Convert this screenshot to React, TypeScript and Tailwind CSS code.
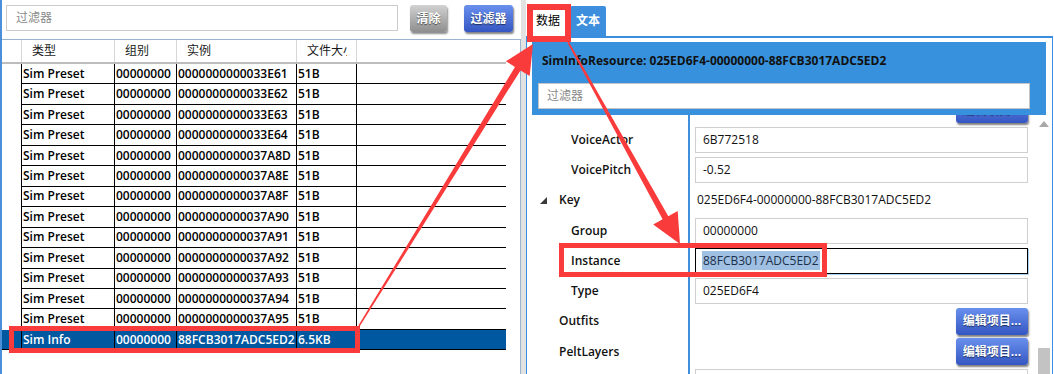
import React from "react";

const FONT = "font-['Open_Sans','Noto_Sans_CJK_SC',sans-serif]";

const ids = ["33E61", "33E62", "33E63", "33E64", "37A8D", "37A8E", "37A8F", "37A90", "37A91", "37A92", "37A93", "37A94", "37A95"];

function arrow(tx: number, ty: number, px: number, py: number, L: number, H: number, w0: number, w1: number) {
  const dx = px - tx;
  const dy = py - ty;
  const len = Math.hypot(dx, dy);
  const ux = dx / len;
  const uy = dy / len;
  const nx = -uy;
  const ny = ux;
  const bx = px - L * ux;
  const by = py - L * uy;
  const pts = [
    [tx + (w0 / 2) * nx, ty + (w0 / 2) * ny],
    [bx + (w1 / 2) * nx, by + (w1 / 2) * ny],
    [bx + H * nx, by + H * ny],
    [px, py],
    [bx - H * nx, by - H * ny],
    [bx - (w1 / 2) * nx, by - (w1 / 2) * ny],
    [tx - (w0 / 2) * nx, ty - (w0 / 2) * ny],
  ];
  return pts.map((p) => `${p[0].toFixed(1)},${p[1].toFixed(1)}`).join(" ");
}

function GreyBtn({ label }: { label: string }) {
  return (
    <div className="h-[27px] px-[6px] rounded-[3px] bg-linear-to-b from-[#d2d2d2] to-[#8e8e8e] shadow-[1px_2px_2px_rgba(0,0,0,0.45)] flex items-center justify-center text-white text-[12px] font-bold [text-shadow:0_1px_1px_rgba(0,0,0,0.55)]">
      {label}
    </div>
  );
}

function BlueBtn({ label, w }: { label: string; w: string }) {
  return (
    <div className={`${w} h-[27px] rounded-[3px] bg-linear-to-b from-[#6a90ee] to-[#3556c2] shadow-[1px_2px_2px_rgba(0,0,0,0.5)] flex items-center justify-center text-white text-[12px] font-bold [text-shadow:0_1px_1px_rgba(0,0,0,0.55)]`}>
      {label}
    </div>
  );
}

function Cell({ children, cls }: { children?: React.ReactNode; cls: string }) {
  return <div className={`flex items-center pl-[1px] overflow-hidden whitespace-nowrap ${cls}`}>{children}</div>;
}

function Row({ type, inst, size, sel }: { type: string; inst: string; size: string; sel?: boolean }) {
  const vr = sel ? "border-r border-[#0b4c88]" : "border-r border-black";
  return (
    <div className={`grid grid-cols-[20px_93px_62px_120px_60px_149px] h-[20.46px] text-[12px] font-semibold ${sel ? "bg-[#0058a1] text-white" : "text-black"}`}>
      <Cell cls={`${vr} ${sel ? "border-b border-black" : ""}`} />
      <Cell cls={`${vr} border-b border-black`}>{type}</Cell>
      <Cell cls={`${vr} border-b border-black`}>00000000</Cell>
      <Cell cls={`${vr} border-b border-black`}>{inst}</Cell>
      <Cell cls={`${vr} border-b border-black`}>{size}</Cell>
      <Cell cls="border-b border-black" />
    </div>
  );
}

function Input({ value, focused }: { value: string; focused?: boolean }) {
  if (focused) {
    return (
      <div className="h-[26px] w-[333px] border border-black shadow-[1px_1px_0_#a9d2f3] flex items-center pl-[6px]">
        <span className="bg-[#9fc0e2] text-[#1b2f4a] text-[12px] leading-[19px] px-[1px]">88FCB3017ADC5ED2</span>
      </div>
    );
  }
  return (
    <div className="h-[26px] w-[333px] border border-[#cfcfcf] flex items-center pl-[7px] text-[12px] text-[#111]">{value}</div>
  );
}

function PropRow({ label, indent, expander, children }: { label?: string; indent: string; expander?: boolean; children?: React.ReactNode }) {
  return (
    <div className="flex h-[30.25px]">
      <div className={`w-[163px] shrink-0 border-r-2 border-[#3f8fdc] flex items-center ${indent} relative`}>
        {expander && (
          <svg className="absolute left-[13px] top-[12px]" width="7" height="7" viewBox="0 0 7 7">
            <polygon points="7,0 7,7 0,7" fill="#3a3a3a" />
          </svg>
        )}
        <span className="text-[12px] font-semibold text-[#111]">{label}</span>
      </div>
      <div className="flex-1 flex items-center pl-[5px]">{children}</div>
    </div>
  );
}

export default function App() {
  const a1 = arrow(359, 326, 533, 44, 29, 14, 1.5, 6.5);
  const a2 = arrow(568, 42, 680, 244, 30, 14, 1.5, 6.5);
  return (
    <div className={`relative w-[1054px] h-[374px] overflow-hidden bg-white flex ${FONT}`}>
      {/* Left panel */}
      <div className="w-[521px] h-full flex flex-col border-l-2 border-[#4a8fd8] shrink-0">
        <div className="h-[39px] flex items-start pt-[5px] pl-[4px] shrink-0">
          <div className="w-[392px] h-[26px] border border-[#cccccc] flex items-center pl-[9px] text-[12px] text-[#8a8a8a]">过滤器</div>
          <div className="ml-[12px] w-[37px]">
            <GreyBtn label="清除" />
          </div>
          <div className="ml-[17px]">
            <BlueBtn label="过滤器" w="w-[49px]" />
          </div>
        </div>
        <div className="flex-1 border-t border-r border-[#9ab3cf] flex flex-col">
          <div className="grid grid-cols-[20px_93px_62px_120px_60px_149px] h-[22px] text-[12px] text-[#1a1a1a] w-[504px]">
            <div className="border-r border-[#d6d6d6]" />
            <div className="border-r border-[#d6d6d6] flex items-center pl-[10px]">类型</div>
            <div className="border-r border-[#d6d6d6] flex items-center pl-[10px]">组别</div>
            <div className="border-r border-[#d6d6d6] flex items-center pl-[10px]">实例</div>
            <div className="border-r border-[#d6d6d6] flex items-center pl-[10px]">
              <span className="w-[40px] overflow-hidden whitespace-nowrap">文件大小</span>
            </div>
            <div />
          </div>
          <div className="h-[2px] w-[504px] bg-[#bdbdbd]" />
          <div className="w-[504px] flex flex-col">
            {ids.map((id) => (
              <Row key={id} type="Sim Preset" inst={`00000000000${id}`} size="51B" />
            ))}
            <Row type="Sim Info" inst="88FCB3017ADC5ED2" size="6.5KB" sel />
          </div>
        </div>
      </div>
      {/* Splitter */}
      <div className="w-[5px] h-full bg-[#e2e2e2] shrink-0" />
      {/* Right panel */}
      <div className="w-[527px] h-full flex flex-col shrink-0">
        <div className="h-[36px] flex items-end pl-[4px] gap-[4px] shrink-0">
          <div className="w-[36px] h-[30px] flex items-center justify-center text-[12px] text-black bg-white">数据</div>
          <div className="w-[36px] h-[30px] flex items-center justify-center text-[12px] font-bold text-white bg-[#3d8fdd] rounded-t-[2px]">文本</div>
        </div>
        <div className="flex-1 border-t-2 border-l border-r border-[#3b8de0] flex flex-col min-h-0">
          <div className="ml-[5px] mr-[6px] mt-[4px] h-[73px] bg-[#3891dc] flex flex-col shrink-0">
            <div className="pl-[10px] pt-[11px] text-[12px] font-bold text-[#111] leading-[16px]">SimInfoResource: 025ED6F4-00000000-88FCB3017ADC5ED2</div>
            <div className="ml-[6px] mt-[14px] w-[492px] h-[26px] bg-white border border-[#c4c4c4] flex items-center pl-[8px] text-[12px] text-[#8a8a8a]">过滤器</div>
          </div>
          <div className="flex-1 flex min-h-0">
            <div className="flex-1 overflow-hidden">
              <div className="flex flex-col mt-[-20.4px]">
                <PropRow indent="pl-[44px]">
                  <div className="w-[333px] flex justify-end">
                    <BlueBtn label="编辑项目..." w="w-[72px]" />
                  </div>
                </PropRow>
                <PropRow label="VoiceActor" indent="pl-[44px]">
                  <Input value="6B772518" />
                </PropRow>
                <PropRow label="VoicePitch" indent="pl-[44px]">
                  <Input value="-0.52" />
                </PropRow>
                <PropRow label="Key" indent="pl-[32px]" expander>
                  <span className="text-[12px] text-[#111] pl-[2px]">025ED6F4-00000000-88FCB3017ADC5ED2</span>
                </PropRow>
                <PropRow label="Group" indent="pl-[44px]">
                  <Input value="00000000" />
                </PropRow>
                <PropRow label="Instance" indent="pl-[44px]">
                  <Input value="88FCB3017ADC5ED2" focused />
                </PropRow>
                <PropRow label="Type" indent="pl-[44px]">
                  <Input value="025ED6F4" />
                </PropRow>
                <PropRow label="Outfits" indent="pl-[32px]">
                  <div className="w-[333px] flex justify-end">
                    <BlueBtn label="编辑项目..." w="w-[72px]" />
                  </div>
                </PropRow>
                <PropRow label="PeltLayers" indent="pl-[32px]">
                  <div className="w-[333px] flex justify-end">
                    <BlueBtn label="编辑项目..." w="w-[72px]" />
                  </div>
                </PropRow>
                <PropRow indent="pl-[44px]">
                  <Input value="" />
                </PropRow>
              </div>
            </div>
            <div className="w-[16px] flex flex-col items-center justify-between shrink-0">
              <svg className="mt-[6px]" width="10" height="6" viewBox="0 0 10 6">
                <polygon points="5,0 10,6 0,6" fill="#a8a8a8" />
              </svg>
              <div className="w-[12px] h-[26px] bg-[#c3c3c3]" />
            </div>
          </div>
        </div>
      </div>
      {/* Annotations */}
      <svg className="absolute left-0 top-0 pointer-events-none" width="1054" height="374" viewBox="0 0 1054 374">
        <rect x="11.5" y="328.5" width="346" height="22" fill="none" stroke="#fa3b3b" strokeWidth="5" />
        <rect x="530" y="7" width="38" height="32" fill="none" stroke="#fa3b3b" strokeWidth="6" />
        <rect x="561.5" y="245.5" width="263" height="29" fill="none" stroke="#fa3b3b" strokeWidth="5" />
        <polygon points={a1} fill="#fa3b3b" />
        <polygon points={a2} fill="#fa3b3b" />
      </svg>
    </div>
  );
}
